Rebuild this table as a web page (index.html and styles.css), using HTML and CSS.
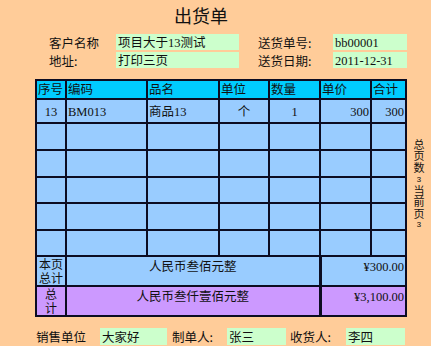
FILE: index.html
```html
<!DOCTYPE html>
<html lang="zh-CN">
<head>
<meta charset="utf-8">
<title>出货单</title>
<link rel="stylesheet" href="styles.css">
</head>
<body>
<div class="page">
  <div class="title">出货单</div>
  <div class="info">
    <div class="lbl">客户名称</div>
    <div class="box">项目大于<span class="n">13</span>测试</div>
    <div></div>
    <div class="lbl">送货单号:</div>
    <div class="box"><span class="n">bb00001</span></div>
    <div class="lbl">地址:</div>
    <div class="box">打印三页</div>
    <div></div>
    <div class="lbl">送货日期:</div>
    <div class="box"><span class="n">2011-12-31</span></div>
  </div>
  <div class="main">
    <table class="grid">
      <colgroup>
        <col class="c1"><col class="c2"><col class="c3"><col class="c4"><col class="c5"><col class="c6"><col class="c7">
      </colgroup>
      <tr class="head">
        <td>序号</td><td>编码</td><td>品名</td><td>单位</td><td>数量</td><td>单价</td><td>合计</td>
      </tr>
      <tr class="r1">
        <td class="ctr"><span class="n">13</span></td><td><span class="n">BM013</span></td><td>商品<span class="n">13</span></td><td class="ctr">个</td><td class="ctr"><span class="n">1</span></td><td class="rt"><span class="n">300</span></td><td class="rt"><span class="n">300</span></td>
      </tr>
      <tr class="r2"><td></td><td></td><td></td><td></td><td></td><td></td><td></td></tr>
      <tr class="r2"><td></td><td></td><td></td><td></td><td></td><td></td><td></td></tr>
      <tr class="r3"><td></td><td></td><td></td><td></td><td></td><td></td><td></td></tr>
      <tr class="r2"><td></td><td></td><td></td><td></td><td></td><td></td><td></td></tr>
      <tr class="r3"><td></td><td></td><td></td><td></td><td></td><td></td><td></td></tr>
      <tr class="sum page-sum">
        <td class="tag">本页总计</td>
        <td colspan="4" class="ctr words">人民币叁佰元整</td>
        <td colspan="2" class="rt amt"><span class="n">¥300.00</span></td>
      </tr>
      <tr class="sum all-sum">
        <td class="tag tag-narrow">总计</td>
        <td colspan="4" class="ctr words">人民币叁仟壹佰元整</td>
        <td colspan="2" class="rt amt"><span class="n">¥3,100.00</span></td>
      </tr>
    </table>
    <div class="side">
      <div class="vt">总页数</div>
      <div class="small">3</div>
      <div class="vt">当前页</div>
      <div class="small">3</div>
    </div>
  </div>
  <div class="foot">
    <div class="f-lbl w1">销售单位</div>
    <div class="box fb1">大家好</div>
    <div class="f-lbl w2">制单人:</div>
    <div class="box fb2">张三</div>
    <div class="f-lbl w3">收货人:</div>
    <div class="box fb3">李四</div>
  </div>
</div>
</body>
</html>
```
FILE: styles.css
```css
html, body {
  margin: 0;
  padding: 0;
}
body {
  background: #ffcc99;
  font-family: "Noto Sans CJK SC", "Noto Sans", sans-serif;
  font-size: 12.5px;
  color: #111;
  width: 431px;
  height: 346px;
  overflow: hidden;
}
.page {
  display: flex;
  flex-direction: column;
}
.n {
  font-family: "Liberation Serif", "DejaVu Serif", serif;
  font-size: 12.5px;
}
.title {
  box-sizing: border-box;
  height: 34px;
  padding-top: 5px;
  padding-left: 174px;
  font-size: 18px;
  line-height: 20px;
}
.info {
  display: grid;
  grid-template-columns: 67px 123px 19px 75px 74px;
  grid-auto-rows: 16px;
  row-gap: 2px;
  margin-left: 49px;
}
.lbl {
  line-height: 18px;
}
.box {
  background: #ccffcc;
  padding-left: 2px;
  line-height: 16px;
  white-space: nowrap;
}
.main {
  display: flex;
  margin-top: 11px;
}
.grid {
  margin-left: 35px;
  width: 370px;
  table-layout: fixed;
  border-collapse: collapse;
  border: 2px solid #0c0c22;
}
.grid td {
  border: 2px solid #0c0c22;
  padding: 0 1px;
  vertical-align: top;
  background: #99ccff;
  line-height: 17px;
  white-space: nowrap;
  overflow: hidden;
}
.c1 { width: 30px; }
.c2 { width: 81px; }
.c3 { width: 72px; }
.c4 { width: 50px; }
.c5 { width: 51px; }
.c6 { width: 51px; }
.c7 { width: 35px; }
.head td {
  background: #00ccff;
  line-height: 16px;
}
.head { height: 19px; }
.r1 { height: 24px; }
.r1 td { padding-top: 2px; }
.r2 { height: 27px; }
.r3 { height: 26px; }
.ctr { text-align: center; }
.rt { text-align: right; }
.page-sum { height: 29px; }
.all-sum { height: 30px; }
.all-sum td { background: #cc99ff; }
.grid td.tag {
  text-align: center;
  vertical-align: middle;
  font-size: 12px;
  line-height: 14px;
  white-space: normal;
  word-break: break-all;
  padding: 0;
}
.grid td.tag-narrow {
  padding: 0 7px;
}
.grid td.amt {
  border-left-width: 3px;
}
.side {
  width: 25px;
  display: flex;
  flex-direction: column;
  align-items: center;
  padding-top: 60px;
}
.side .vt {
  writing-mode: vertical-rl;
  text-orientation: upright;
  font-size: 11px;
  letter-spacing: 0.5px;
  line-height: 14px;
}
.side .small {
  font-family: "Liberation Mono", monospace;
  font-size: 8px;
  line-height: 11px;
}
.foot {
  display: flex;
  margin-top: 11px;
  margin-left: 36px;
  height: 17px;
}
.f-lbl {
  line-height: 17px;
}
.foot .box { line-height: 17px; }
.w1 { width: 64px; }
.fb1 { width: 65px; }
.w2 { width: 55px; margin-left: 5px; }
.fb2 { width: 57px; }
.w3 { width: 56px; margin-left: 4px; }
.fb3 { width: 57px; }
```
